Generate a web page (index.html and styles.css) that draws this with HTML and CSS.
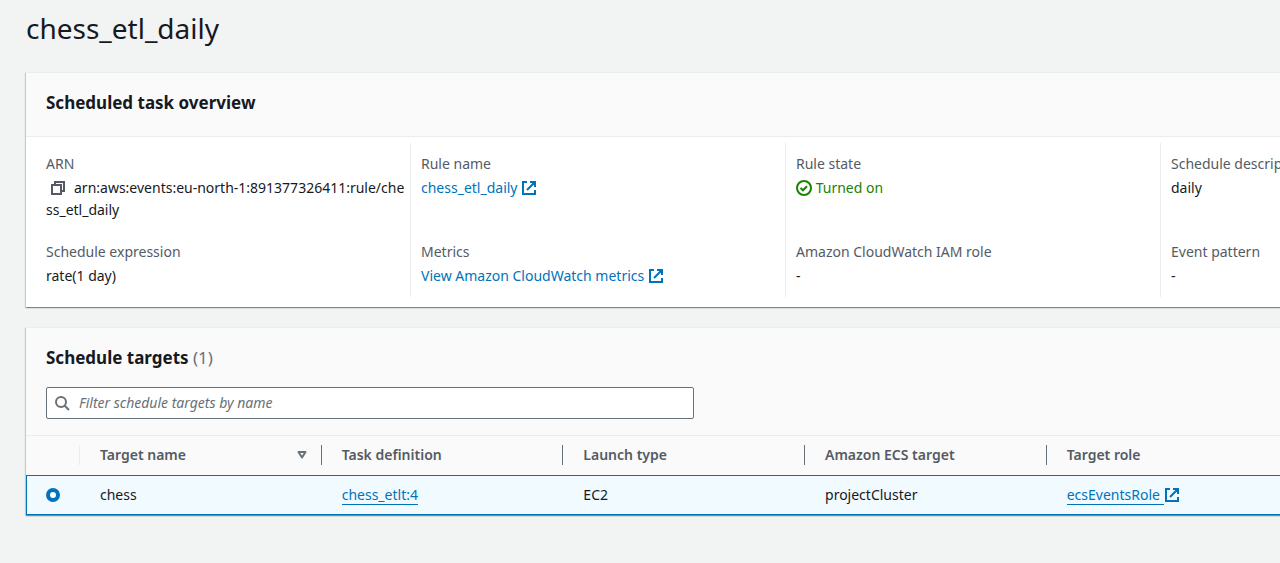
FILE: index.html
```html
<!DOCTYPE html>
<html lang="en">
<head>
<meta charset="utf-8">
<title>chess_etl_daily</title>
<link rel="stylesheet" href="styles.css">
</head>
<body>
<svg class="sprite" width="0" height="0" aria-hidden="true">
  <symbol id="external" viewBox="0 0 16 16"><path d="M6 2H2v12h12v-4M9 2h5v5M14 2L6 10" fill="none" stroke="currentColor" stroke-width="2"/><path d="M10 2h4v4z" fill="currentColor"/></symbol>
</svg>
<main class="page">
  <h1 class="page-title">chess_etl_daily</h1>

  <section class="panel">
    <header class="panel-header"><h2 class="panel-title">Scheduled task overview</h2></header>
    <dl class="overview">
      <div class="field"><dt>ARN</dt><dd class="breakable"><button class="copy" type="button" aria-label="Copy ARN"><svg class="icon" viewBox="0 0 16 16"><path d="M2 5h9v9H2zM5 5V2h9v9h-3" fill="none" stroke="currentColor" stroke-width="2"/></svg></button>arn:aws:events:eu-north-1:891377326411:rule/chess_etl_daily</dd></div>
      <div class="field"><dt>Rule name</dt><dd><a class="link" href="#rule">chess_etl_daily <svg class="icon"><use href="#external"/></svg></a></dd></div>
      <div class="field"><dt>Rule state</dt><dd class="status"><svg class="icon" viewBox="0 0 16 16"><g fill="none" stroke="currentColor" stroke-width="2"><circle cx="8" cy="8" r="7"/><path d="M4.5 8l2.5 2.3 4-4"/></g></svg> Turned on</dd></div>
      <div class="field"><dt>Schedule description</dt><dd>daily</dd></div>
      <div class="field"><dt>Schedule expression</dt><dd>rate(1 day)</dd></div>
      <div class="field"><dt>Metrics</dt><dd><a class="link" href="#metrics">View Amazon CloudWatch metrics <svg class="icon"><use href="#external"/></svg></a></dd></div>
      <div class="field"><dt>Amazon CloudWatch IAM role</dt><dd>-</dd></div>
      <div class="field"><dt>Event pattern</dt><dd>-</dd></div>
    </dl>
  </section>

  <section class="panel">
    <header class="panel-header targets-header">
      <h2 class="panel-title">Schedule targets <span class="count">(1)</span></h2>
      <label class="search">
        <svg class="icon" viewBox="0 0 16 16"><g fill="none" stroke="currentColor" stroke-width="2"><circle cx="7" cy="7" r="5"/><path d="M10.5 10.5L15 15"/></g></svg>
        <input type="search" placeholder="Filter schedule targets by name" aria-label="Filter schedule targets by name">
      </label>
    </header>
    <table class="targets">
      <colgroup><col class="col-select"><col class="col-data"><col class="col-data"><col class="col-data"><col class="col-data"><col></colgroup>
      <thead>
        <tr>
          <th scope="col" class="select-head"><div class="head"></div></th>
          <th scope="col"><div class="head">Target name <svg class="sort" viewBox="0 0 16 16"><path d="M4.5 5h7L8 10.5z" fill="none" stroke="currentColor" stroke-width="2" stroke-linejoin="round"/></svg></div></th>
          <th scope="col"><div class="head">Task definition</div></th>
          <th scope="col"><div class="head">Launch type</div></th>
          <th scope="col"><div class="head">Amazon ECS target</div></th>
          <th scope="col"><div class="head">Target role</div></th>
        </tr>
      </thead>
      <tbody>
        <tr>
          <td><input class="radio" type="radio" name="target" aria-label="Select chess" checked></td>
          <td>chess</td>
          <td><a class="link" href="#task"><span class="underlined">chess_etlt:4</span></a></td>
          <td>EC2</td>
          <td>projectCluster</td>
          <td><a class="link" href="#role"><span class="underlined">ecsEventsRole&nbsp;</span><svg class="icon"><use href="#external"/></svg></a></td>
        </tr>
      </tbody>
    </table>
  </section>
</main>
</body>
</html>
```
FILE: styles.css
```css
* { box-sizing: border-box; }
body {
  margin: 0;
  overflow-x: hidden;
  background: #f2f3f3;
  color: #16191f;
  font: 14px/22px "Noto Sans", sans-serif;
}
.sprite { position: absolute; }
.page { min-width: 1572px; padding: 10px 26px 48px; }
.page-title { margin: 0 0 26px; font-size: 28px; line-height: 36px; font-weight: 400; }
.panel {
  margin-bottom: 20px;
  background: #fff;
  border-top: 1px solid #eaeded;
  box-shadow: 0 1px 1px 0 rgba(0, 28, 36, .3), 1px 1px 1px 0 rgba(0, 28, 36, .15), -1px 1px 1px 0 rgba(0, 28, 36, .15);
}
.panel-header { padding: 19px 20px 22px; background: #fafafa; border-bottom: 1px solid #eaeded; }
.panel-title { margin: 0; font-size: 17px; line-height: 22px; font-weight: 700; }
.count { color: #687078; font-weight: 400; }
.icon { width: 16px; height: 16px; vertical-align: -3px; }

.overview { display: grid; grid-template-columns: repeat(4, 1fr); margin: 0; padding: 6px 10px 10px; }
.field { padding: 10px 4px 10px 10px; border-right: 1px solid #eaeded; }
.field:nth-child(4n) { border-right: 0; }
.field dt { color: #545b64; }
.field dd { margin: 2px 0 0; }
.breakable { word-break: break-all; }
.copy { margin: 0 8px 0 4px; padding: 0; border: 0; background: none; color: #545b64; line-height: 16px; }
.link { color: #0073bb; text-decoration: none; }
.status { color: #1d8102; }

.targets-header { padding-bottom: 16px; }
.search {
  display: flex;
  align-items: center;
  gap: 9px;
  width: 648px;
  height: 32px;
  margin-top: 18px;
  padding: 0 7px;
  border: 1px solid #687078;
  border-radius: 2px;
  background: #fff;
  color: #687078;
}
.search input { flex: 1; padding: 0; border: 0; outline: 0; background: none; font: inherit; color: #16191f; }
.search input::placeholder { color: #687078; font-style: italic; }

.targets { width: 100%; table-layout: fixed; border-collapse: separate; border-spacing: 0; }
.col-select { width: 54px; }
.col-data { width: 15.9%; }
.targets th { height: 39px; padding: 0 0 1px; background: #fafafa; color: #545b64; font-weight: 600; text-align: left; }
.head { display: flex; align-items: center; justify-content: space-between; height: 20px; padding: 0 11px 0 20px; border-right: 1px solid #687078; }
.select-head .head { border-color: #eaeded; }
.sort { width: 16px; height: 16px; color: #687078; }
.targets td { height: 40px; padding: 0 20px; background: #f1faff; border: solid #0073bb; border-width: 1px 0; line-height: 20px; }
.targets td:first-child { border-left-width: 1px; padding-left: 19px; }
.targets td:last-child { border-right-width: 1px; }
.radio { display: block; appearance: none; width: 14px; height: 14px; margin: 0; border: 4px solid #0073bb; border-radius: 50%; background: #fff; }
.underlined { border-bottom: 1px solid #0073bb; }
```
